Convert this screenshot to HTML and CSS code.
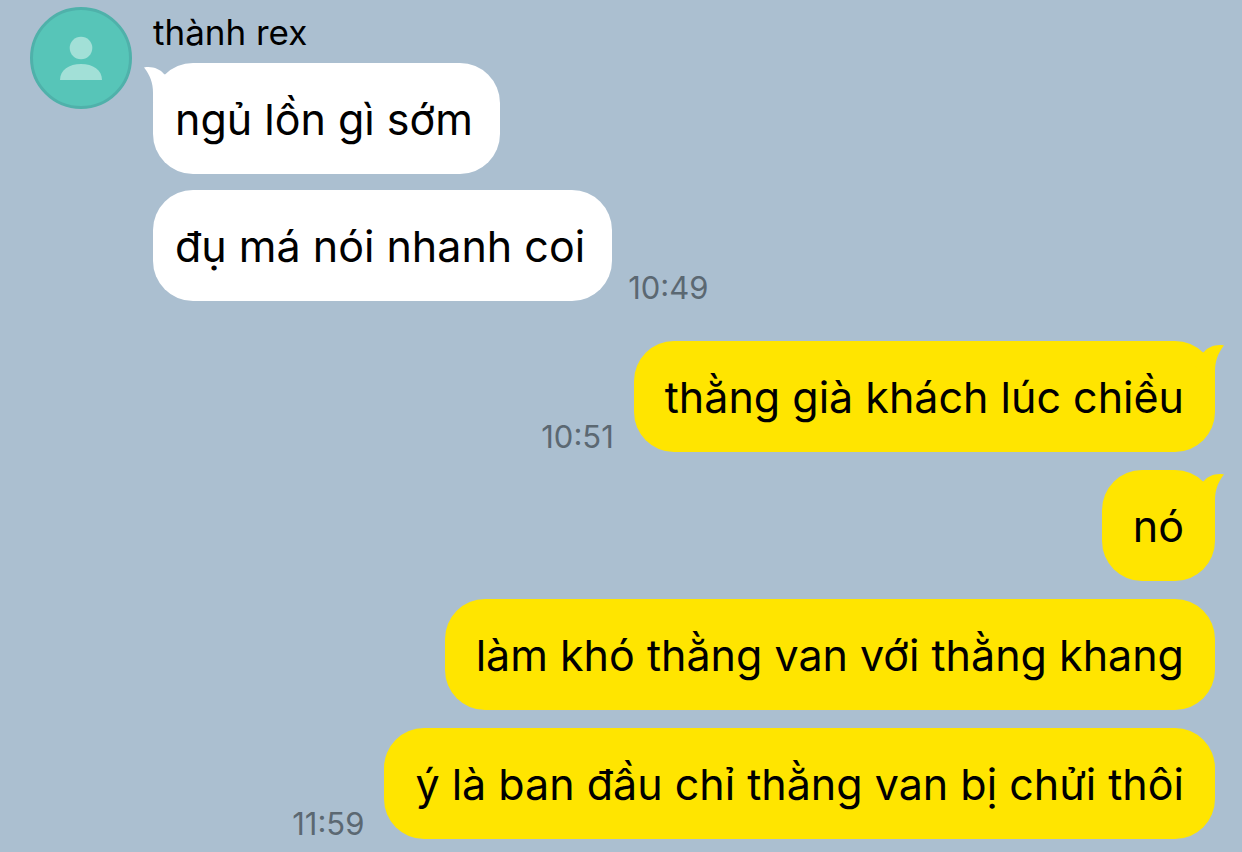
FILE: index.html
```html
<!DOCTYPE html>
<html lang="vi">

<head>
	<meta charset="utf-8">
	<meta name="viewport" content="width=device-width, initial-scale=1">
	<title>thành rex</title>
	<link rel="stylesheet" href="styles.css">
</head>

<body>
	<main class="chat">
		<section class="received">
			<svg class="avatar" viewBox="0 0 102 102" aria-hidden="true">
				<circle cx="51" cy="51" r="49.5" fill="#57c5b8" stroke="#4fb1aa" stroke-width="3" />
				<circle cx="51" cy="41" r="11.3" fill="#a2e0d7" />
				<path d="M30 73C30 63 39 57 51 57S72 63 72 73Z" fill="#a2e0d7" />
			</svg>
			<div class="messages">
				<h1 class="name">thành rex</h1>
				<div class="row">
					<p class="bubble">
						ngủ lồn gì sớm
						<svg class="tail" viewBox="0 0 36 40" aria-hidden="true">
							<path d="M0 4.5C8 3 16 6 20 11L36 20L9 40V30C9 20 6 12 0 4.5Z" />
						</svg>
					</p>
				</div>
				<div class="row">
					<p class="bubble">đụ má nói nhanh coi</p>
					<time class="time">10:49</time>
				</div>
			</div>
		</section>

		<section class="sent">
			<div class="row">
				<time class="time">10:51</time>
				<p class="bubble">
					thằng già khách lúc chiều
					<svg class="tail" viewBox="0 0 36 40" aria-hidden="true">
						<path d="M36 4.5C28 3 20 6 16 11L0 20L27 40V30C27 20 30 12 36 4.5Z" />
					</svg>
				</p>
			</div>
			<div class="row">
				<p class="bubble">
					nó
					<svg class="tail" viewBox="0 0 36 40" aria-hidden="true">
						<path d="M36 4.5C28 3 20 6 16 11L0 20L27 40V30C27 20 30 12 36 4.5Z" />
					</svg>
				</p>
			</div>
			<div class="row">
				<p class="bubble">làm khó thằng van với thằng khang</p>
			</div>
			<div class="row">
				<time class="time">11:59</time>
				<p class="bubble">ý là ban đầu chỉ thằng van bị chửi thôi</p>
			</div>
		</section>
	</main>
</body>

</html>
```
FILE: styles.css
```css
* {
	box-sizing: border-box;
}

body {
	margin: 0;
	background-color: #abbfd0;
	color: #000;
	font-family: Inter, "Noto Sans", sans-serif;
}

.chat {
	display: flex;
	flex-direction: column;
	gap: 40px;
	padding: 7px 27px 12px 30px;
}

.received {
	display: flex;
	align-items: flex-start;
	gap: 21px;
}

.avatar {
	width: 102px;
	height: 102px;
	flex-shrink: 0;
}

.messages {
	display: flex;
	flex-direction: column;
	gap: 16px;
}

.name {
	margin: 0 0 -16px;
	padding-bottom: 6px;
	font-size: 35px;
	font-weight: 400;
	line-height: 50px;
}

.row {
	display: flex;
	align-items: flex-end;
	gap: 16px;
}

.bubble {
	position: relative;
	margin: 0;
	padding: 29px 27px 27px 22px;
	border-radius: 40px;
	background-color: #fff;
	font-size: 43px;
	line-height: 55px;
}

.sent {
	display: flex;
	flex-direction: column;
	gap: 18px;
}

.sent .row {
	justify-content: flex-end;
	gap: 20px;
}

.sent .bubble {
	padding: 29px 31px 27px;
	background-color: #ffe500;
}

.tail {
	position: absolute;
	top: 0;
	left: -9px;
	width: 36px;
	height: 40px;
	fill: #fff;
}

.sent .tail {
	right: -9px;
	left: auto;
	fill: #ffe500;
}

.time {
	color: #5b6872;
	font-size: 31px;
	line-height: 26px;
}

.sent .time {
	line-height: 30px;
}
```
